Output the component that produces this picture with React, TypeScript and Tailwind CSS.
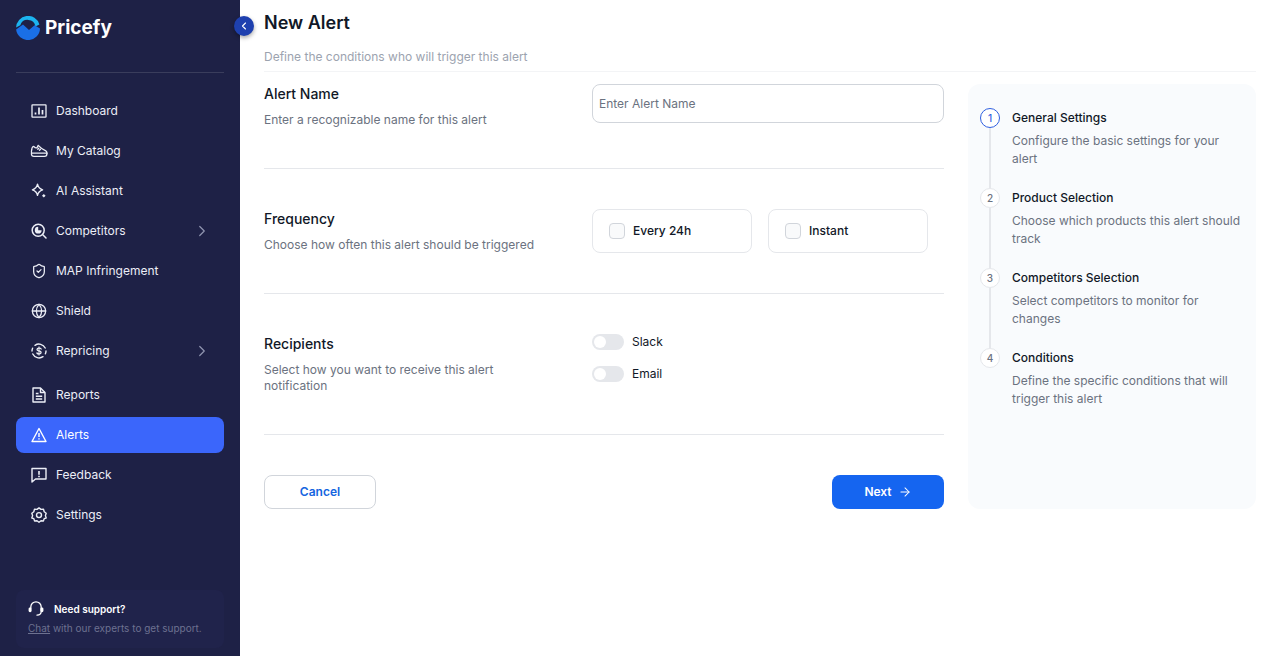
import { ArrowRight, ChevronLeft, ChevronRight, Globe, ShieldCheck } from "lucide-react";
import type { ReactNode } from "react";

const cls = "w-4 h-4";

function DashIcon() {
  return (
    <svg viewBox="0 0 16 16" fill="none" stroke="currentColor" strokeWidth="1.3" className={cls}>
      <rect x="1" y="1.8" width="14" height="12.4" rx="0.5" />
      <path d="M4.5 11.5V9.5M8 11.5V4.5M11.5 11.5V7" strokeWidth="1.7" />
    </svg>
  );
}

function ShoeIcon() {
  return (
    <svg viewBox="0 0 18 16" fill="none" stroke="currentColor" strokeWidth="1.3" strokeLinejoin="round" strokeLinecap="round" className="w-[18px] h-4">
      <path d="M1.8 6.5C1.8 4.5 3 3.2 4 3.6C4.8 4.6 6 5.2 7 4.8L8.2 2.4C10.5 5 13.5 6.8 15.8 7.8C16.8 8.3 17 9.2 17 10.2H1.5C1.2 8.8 1.5 7.5 1.8 6.5Z" />
      <path d="M1.5 10.2C1.2 12.8 2.4 13.4 4 13.4H14.5C16.2 13.4 17 12.5 17 10.2" />
      <path d="M8.8 5.2L7.8 6.2M10.5 6.2L9.5 7.2" />
    </svg>
  );
}

function SparkIcon() {
  return (
    <svg viewBox="0 0 16 16" fill="none" stroke="currentColor" strokeWidth="1.4" strokeLinejoin="round" className={cls}>
      <path d="M6.5 1.2C7 4 8.6 5.8 11.6 6.8C8.6 7.8 7 9.6 6.5 12.4C6 9.6 4.4 7.8 1.4 6.8C4.4 5.8 6 4 6.5 1.2Z" />
      <path d="M12.8 11L14.6 12.8L12.8 14.6L11 12.8Z" fill="currentColor" stroke="none" />
    </svg>
  );
}

function CompetitorIcon() {
  return (
    <svg viewBox="0 0 16 16" fill="none" stroke="currentColor" strokeWidth="1.5" strokeLinecap="round" className={cls}>
      <circle cx="7.2" cy="7.2" r="6" />
      <path d="M11.8 11.8L15 15" />
      <path d="M7.2 3.8A3.4 3.4 0 1 0 10.6 7.2H7.2Z" fill="currentColor" stroke="none" />
    </svg>
  );
}

function RepriceIcon() {
  return (
    <svg viewBox="0 0 16 16" fill="none" stroke="currentColor" strokeWidth="1.4" strokeLinecap="round" className={cls}>
      <path d="M14.2 5A7 7 0 0 0 4 2.3M1.8 11A7 7 0 0 0 12 13.7M1 8A7 7 0 0 1 1.6 5.2M15 8A7 7 0 0 1 14.4 10.8" />
      <path d="M10.2 6C9.4 4.8 6.2 4.6 6 6.6C5.9 8.5 10.2 7.4 10.1 9.5C10 11.4 6.8 11.2 5.9 10" strokeWidth="1.3" />
      <path d="M8 3.9V12.1" strokeWidth="1" />
    </svg>
  );
}

function ReportIcon() {
  return (
    <svg viewBox="0 0 16 16" fill="none" stroke="currentColor" strokeWidth="1.4" strokeLinejoin="round" className={cls}>
      <path d="M2 1H9.5L14 5.5V15H2Z" />
      <path d="M9.5 1V5.5H14" />
      <path d="M4.8 6.5H7.5M4.8 9.2H11.2M4.8 12H11.2" />
    </svg>
  );
}

function AlertIcon() {
  return (
    <svg viewBox="0 0 16 16" fill="none" stroke="currentColor" strokeWidth="1.4" strokeLinejoin="round" className={cls}>
      <path d="M8 1.5L15 14.5H1Z" />
      <path d="M8 6V10M8 11.2V12.6" />
    </svg>
  );
}

function FeedbackIcon() {
  return (
    <svg viewBox="0 0 16 16" fill="none" stroke="currentColor" strokeWidth="1.4" strokeLinejoin="round" className={cls}>
      <path d="M1 1.5H15V12H4.5L1 15Z" />
      <path d="M8 4V7.7M8 8.8V10.2" strokeWidth="1.6" />
    </svg>
  );
}

function GearIcon() {
  return (
    <svg viewBox="0 0 16 16" fill="none" stroke="currentColor" strokeWidth="1.4" strokeLinejoin="round" className={cls}>
      <path d="M8 0.9L10 2.4L12.5 2.3L13.2 4.7L15.2 6.2L14.4 8.6L15.2 11L13.2 11.6L12.4 14L10 13.7L8 15.2L6 13.7L3.6 14L2.8 11.6L0.8 11L1.6 8.6L0.8 6.2L2.8 4.7L3.5 2.3L6 2.4Z" />
      <circle cx="8" cy="8.1" r="2.5" />
    </svg>
  );
}

function HeadsetIcon() {
  return (
    <svg viewBox="0 0 16 16" fill="none" stroke="currentColor" strokeWidth="1.3" strokeLinecap="round" className={cls}>
      <path d="M2.8 7V6A5.2 5.2 0 0 1 13.2 6V10.5C13.2 12.8 11.5 14 9 14.2" />
      <rect x="0.6" y="6.4" width="3" height="4.8" rx="1.4" fill="currentColor" stroke="none" />
      <rect x="12.4" y="6.4" width="3" height="4.8" rx="1.4" fill="currentColor" stroke="none" />
    </svg>
  );
}

function Logo() {
  return (
    <svg viewBox="0 0 24 24" className="w-6 h-6 shrink-0">
      <path d="M0.1 11.6A11.9 11.9 0 0 1 23.4 8.4L19.4 10.4A7.8 7.8 0 0 0 4.3 9.2Z" fill="#1cb4f0" />
      <path d="M0.1 13.6L7 8.6L13 14L18.6 9.2L24 12.4A12 12 0 0 1 0.1 13.6Z" fill="#1a6fe6" />
    </svg>
  );
}

function NavItem({ icon, label, chevron, active }: { icon: ReactNode; label: string; chevron?: boolean; active?: boolean }) {
  return (
    <a className={`h-9 flex items-center pl-[14px] pr-4 rounded-lg text-xs font-normal text-[#eceef6] ${active ? "bg-[#3b66fb] text-white" : ""}`}>
      <span className="w-[18px] flex justify-center">{icon}</span>
      <span className="ml-2">{label}</span>
      {chevron && <ChevronRight className="w-[18px] h-[18px] ml-auto text-[#9095b0] -mr-[3px]" strokeWidth={1.6} />}
    </a>
  );
}

function Section({ title, desc, children, height, top }: { title: string; desc: string; children: ReactNode; height: string; top: string }) {
  return (
    <section className={`${height} ${top} flex border-b border-[#e5e7eb]`}>
      <div className="w-[328px] pr-[40px]">
        <h3 className="text-sm font-medium text-[#111827] leading-5">{title}</h3>
        <p className="text-xs text-[#6b7280] mt-2 leading-4">{desc}</p>
      </div>
      <div className="flex-1">{children}</div>
    </section>
  );
}

function FreqCard({ label }: { label: string }) {
  return (
    <label className="w-40 h-11 border border-[#e5e7eb] rounded-lg flex items-center pl-4 gap-2">
      <span className="w-4 h-4 rounded-[4px] border border-[#d1d5db] bg-[#f9fafb]" />
      <span className="text-xs font-medium text-[#111827]">{label}</span>
    </label>
  );
}

function Toggle({ label }: { label: string }) {
  return (
    <div className="flex items-center gap-2 h-4">
      <span className="w-8 h-4 rounded-full bg-[#e5e7eb] p-[2px] flex">
        <span className="w-3 h-3 rounded-full bg-white" />
      </span>
      <span className="text-xs text-[#111827]">{label}</span>
    </div>
  );
}

const steps = [
  ["General Settings", "Configure the basic settings for your alert"],
  ["Product Selection", "Choose which products this alert should track"],
  ["Competitors Selection", "Select competitors to monitor for changes"],
  ["Conditions", "Define the specific conditions that will trigger this alert"],
];

export default function App() {
  return (
    <div className="flex h-[656px] w-[1280px] overflow-hidden bg-white font-['Inter',sans-serif]">
      <aside className="relative w-60 shrink-0 bg-[#1e2146] px-4 flex flex-col">
        <div className="h-[73px] shrink-0 border-b border-[#3a3d5c] flex items-start pt-4 gap-[5px]">
          <Logo />
          <span className="text-[19px] font-bold text-white leading-6">Pricefy</span>
        </div>
        <button className="absolute left-[234px] top-4 w-5 h-5 rounded-full bg-[#1e40af] text-white flex items-center justify-center shadow-[0_2px_4px_rgba(0,0,0,0.35)]">
          <ChevronLeft className="w-3 h-3" strokeWidth={2.25} />
        </button>
        <nav className="mt-5 flex flex-col gap-1">
          <NavItem icon={<DashIcon />} label="Dashboard" />
          <NavItem icon={<ShoeIcon />} label="My Catalog" />
          <NavItem icon={<SparkIcon />} label="AI Assistant" />
          <NavItem icon={<CompetitorIcon />} label="Competitors" chevron />
          <NavItem icon={<ShieldCheck className={cls} strokeWidth={1.9} />} label="MAP Infringement" />
          <NavItem icon={<Globe className={cls} strokeWidth={1.9} />} label="Shield" />
          <NavItem icon={<RepriceIcon />} label="Repricing" chevron />
          <div className="mt-1 flex flex-col gap-1">
            <NavItem icon={<ReportIcon />} label="Reports" />
            <NavItem icon={<AlertIcon />} label="Alerts" active />
            <NavItem icon={<FeedbackIcon />} label="Feedback" />
            <NavItem icon={<GearIcon />} label="Settings" />
          </div>
        </nav>
        <div className="mt-auto mb-2 h-[58px] rounded-lg bg-[#20234b] px-3 pt-[9px]">
          <div className="flex items-center gap-[10px] h-5 text-white">
            <HeadsetIcon />
            <span className="text-[10px] font-semibold">Need support?</span>
          </div>
          <p className="-mt-[1px] text-[10px] leading-5 text-[#6d7190] whitespace-nowrap">
            <span className="underline">Chat</span> with our experts to get support.
          </p>
        </div>
      </aside>

      <main className="flex-1 px-6 pr-6">
        <header className="h-[72px] border-b border-[#f3f4f6] pt-[12px]">
          <h1 className="text-lg font-semibold text-[#111827] leading-[22px]">New Alert</h1>
          <p className="text-xs text-[#9ca3af] mt-[15px] leading-4">Define the conditions who will trigger this alert</p>
        </header>
        <div className="flex gap-6 mt-3">
          <div className="w-[680px]">
            <Section title="Alert Name" desc="Enter a recognizable name for this alert" height="h-[85px]" top="">
              <input placeholder="Enter Alert Name" className="w-full h-[39px] border border-[#d1d5db] rounded-lg px-[6px] text-xs outline-none placeholder:text-[#6b7280]" />
            </Section>
            <Section title="Frequency" desc="Choose how often this alert should be triggered" height="h-[125px]" top="pt-10">
              <div className="flex gap-4">
                <FreqCard label="Every 24h" />
                <FreqCard label="Instant" />
              </div>
            </Section>
            <Section title="Recipients" desc="Select how you want to receive this alert notification" height="h-[141px]" top="pt-10">
              <div className="flex flex-col gap-4">
                <Toggle label="Slack" />
                <Toggle label="Email" />
              </div>
            </Section>
            <div className="flex justify-between mt-10">
              <button className="w-28 h-[34px] border border-[#d1d5db] rounded-lg text-xs font-semibold text-[#1565e0]">Cancel</button>
              <button className="w-28 h-[34px] rounded-lg bg-[#1565f0] text-white text-xs font-semibold flex items-center justify-center gap-[6px]">
                Next <ArrowRight className="w-3.5 h-3.5" strokeWidth={1.75} />
              </button>
            </div>
          </div>
          <aside className="w-72 h-[425px] bg-[#f9fbfd] rounded-xl pl-3 pr-1 pt-6">
            {steps.map(([t, d], i) => (
              <div key={t} className="flex gap-3 h-20">
                <div className="flex flex-col items-center w-5">
                  <span className={`w-5 h-5 shrink-0 rounded-full border flex items-center justify-center text-[10px] font-medium bg-white ${i === 0 ? "border-[#2f5fe0] text-[#2f5fe0]" : "border-[#e5e7eb] text-[#6b7280]"}`}>{i + 1}</span>
                  {i < 3 && <span className="w-[2px] flex-1 bg-[#e5e7eb]" />}
                </div>
                <div className="w-[230px]">
                  <h4 className="text-xs font-medium text-[#111827] leading-5">{t}</h4>
                  <p className="text-xs text-[#6b7280] leading-[18px] mt-1">{d}</p>
                </div>
              </div>
            ))}
          </aside>
        </div>
      </main>
    </div>
  );
}
